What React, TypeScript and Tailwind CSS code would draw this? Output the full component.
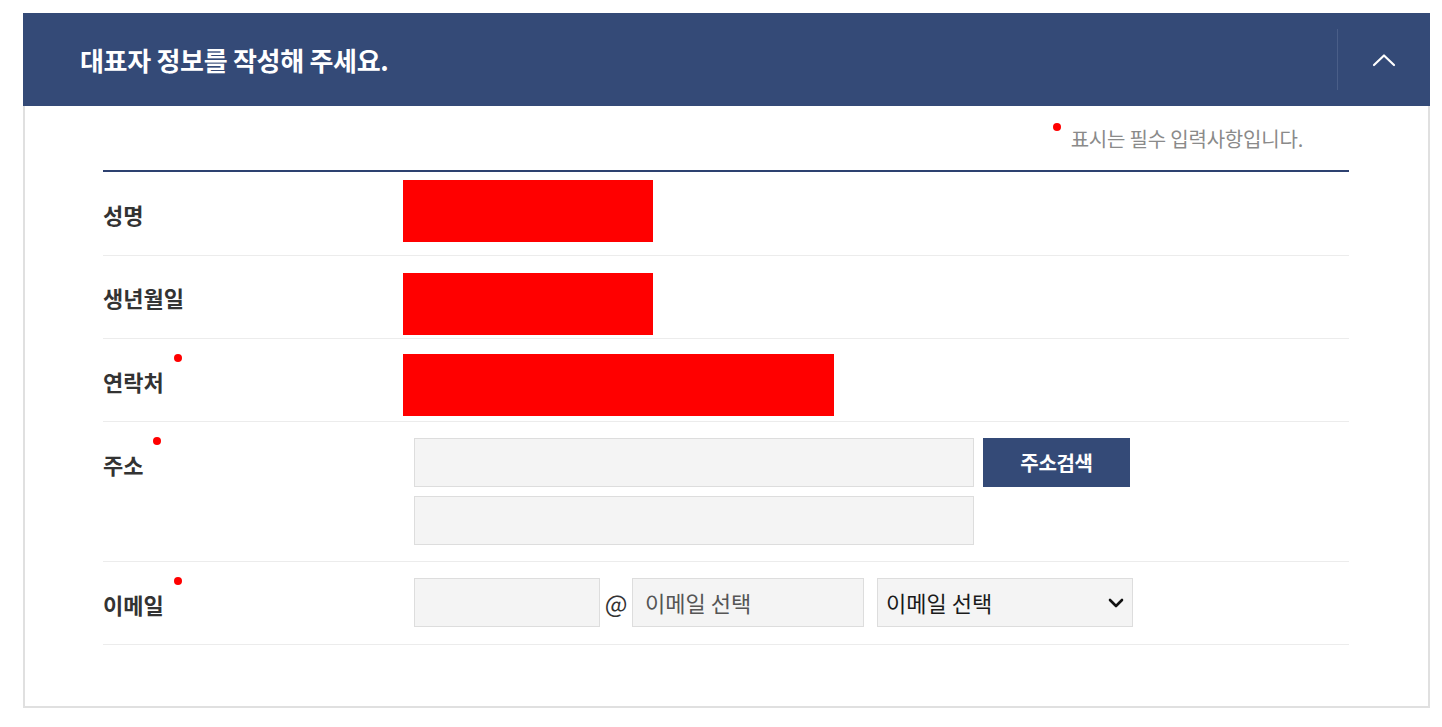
import React from "react";

const FONT = { fontFamily: '"Noto Sans CJK KR", "Noto Sans", sans-serif' };

function Label({ text, required }: { text: string; required?: boolean }) {
  return (
    <span className="relative inline-block text-[22px] leading-[22px] font-bold text-[#333333]">
      {text}
      {required && (
        <span className="absolute left-[calc(100%+10px)] top-[-16px] w-[8px] h-[8px] rounded-full bg-[#ff0000]" />
      )}
    </span>
  );
}

function Box({ className }: { className: string }) {
  return <div className={`bg-[#f4f4f4] border border-[#dddddd] h-[49px] ${className}`} />;
}

export default function App() {
  return (
    <div className="w-[1442px] h-[727px] bg-white pt-[13px] pl-[23px]" style={FONT}>
      <div className="w-[1407px]">
        {/* Header */}
        <div className="h-[93px] bg-[#344a77] flex items-center">
          <div className="flex-1 pl-[57px] text-white text-[26px] font-bold tracking-[-0.3px]">
            대표자 정보를 작성해 주세요.
          </div>
          <div className="w-px h-[61px] bg-[#4a5e88]" />
          <div className="w-[92px] flex items-center justify-center">
            <svg width="24" height="14" viewBox="0 0 24 14" fill="none">
              <path d="M2 12 L12 2.5 L22 12" stroke="white" strokeWidth="2.2" strokeLinecap="round" strokeLinejoin="round" />
            </svg>
          </div>
        </div>

        {/* Body */}
        <div className="border-x-2 border-b-2 border-[#e0e0e0] pl-[78px] pr-[79px] pb-[61px]">
          <div className="h-[64px] pt-[23px] flex justify-end pr-[46px]">
            <span className="relative inline-block text-[20px] leading-[20px] text-[#8a8a8a] tracking-[-0.2px]">
              <span className="absolute left-[-18px] top-[-6px] w-[8px] h-[8px] rounded-full bg-[#ff0000]" />
              표시는 필수 입력사항입니다.
            </span>
          </div>

          <div className="border-t-2 border-[#2d4170]">
            {/* 성명 */}
            <div className="flex h-[84px] border-b border-[#ececec]">
              <div className="w-[300px] flex items-center">
                <Label text="성명" />
              </div>
              <div className="pt-[8px]">
                <div className="w-[250px] h-[62px] bg-[#ff0000]" />
              </div>
            </div>

            {/* 생년월일 */}
            <div className="flex h-[83px] border-b border-[#ececec]">
              <div className="w-[300px] flex items-center">
                <Label text="생년월일" />
              </div>
              <div className="pt-[17px]">
                <div className="w-[250px] h-[62px] bg-[#ff0000]" />
              </div>
            </div>

            {/* 연락처 */}
            <div className="flex h-[83px] border-b border-[#ececec]">
              <div className="w-[300px] flex items-center pt-[2px]">
                <Label text="연락처" required />
              </div>
              <div className="pt-[15px]">
                <div className="w-[431px] h-[62px] bg-[#ff0000]" />
              </div>
            </div>

            {/* 주소 */}
            <div className="flex border-b border-[#ececec] pt-[16px] pb-[16px]">
              <div className="w-[311px] h-[49px] flex items-center pt-[3px]">
                <Label text="주소" required />
              </div>
              <div className="flex flex-col gap-[9px]">
                <div className="flex gap-[9px]">
                  <Box className="w-[560px]" />
                  <div className="w-[147px] h-[49px] bg-[#344a77] flex items-center justify-center text-white text-[20px] font-bold tracking-[-0.3px]">
                    주소검색
                  </div>
                </div>
                <Box className="w-[560px]" />
              </div>
            </div>

            {/* 이메일 */}
            <div className="flex border-b border-[#ececec] pt-[16px] pb-[17px]">
              <div className="w-[311px] h-[49px] flex items-center pt-[2px]">
                <Label text="이메일" required />
              </div>
              <div className="flex items-center">
                <Box className="w-[186px]" />
                <div className="w-[32px] text-center text-[24px] leading-[24px] text-[#333333]">@</div>
                <div className="w-[232px] h-[49px] bg-[#f4f4f4] border border-[#dddddd] flex items-center pl-[12px] text-[22px] text-[#555555]">
                  이메일 선택
                </div>
                <div className="ml-[13px] w-[256px] h-[49px] bg-[#f4f4f4] border border-[#dddddd] flex items-center justify-between pl-[8px] pr-[8px] text-[22px] text-[#1a1a1a]">
                  <span>이메일 선택</span>
                  <svg width="16" height="10" viewBox="0 0 16 10" fill="none">
                    <path d="M2 2 L8 8 L14 2" stroke="#111111" strokeWidth="2.6" strokeLinecap="round" strokeLinejoin="round" />
                  </svg>
                </div>
              </div>
            </div>
          </div>
        </div>
      </div>
    </div>
  );
}
